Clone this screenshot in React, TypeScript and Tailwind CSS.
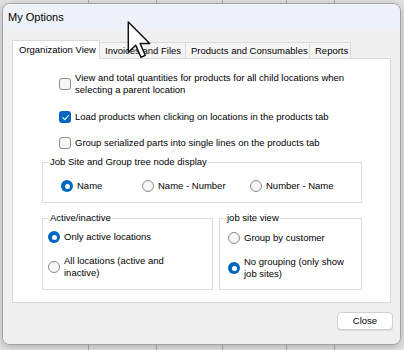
import React from "react";

const font = { fontFamily: '"Liberation Sans", Arial, sans-serif' };

const CheckBox = ({ checked }: { checked?: boolean }) =>
    checked ? (
        <span className="w-[12px] h-[12px] shrink-0 rounded-[3px] bg-[#0067c0] flex items-center justify-center">
            <svg width="9" height="9" viewBox="0 0 10 10">
                <path d="M2 5.2 L4.2 7.3 L8.2 2.8" fill="none" stroke="white" strokeWidth="1.2" strokeLinecap="round" strokeLinejoin="round" />
            </svg>
        </span>
    ) : (
        <span className="w-[12px] h-[12px] shrink-0 rounded-[3px] border border-[#8b8b8b] bg-[#f7f7f7]" />
    );

const Radio = ({ checked }: { checked?: boolean }) =>
    checked ? (
        <span className="w-[12px] h-[12px] shrink-0 rounded-full bg-[#0067c0] flex items-center justify-center">
            <span className="w-[5px] h-[5px] rounded-full bg-white" />
        </span>
    ) : (
        <span className="w-[12px] h-[12px] shrink-0 rounded-full border border-[#8b8b8b] bg-[#f7f7f7]" />
    );

const Tab = ({ label, width, active }: { label: string; width: string; active?: boolean }) => (
    <div
        className={
            active
                ? `${width} h-[19px] -mb-px relative z-10 bg-white border border-b-0 border-[#d9d9d9] pl-[6px] flex items-center`
                : `${width} h-[16px] bg-[#f5f5f5] border border-l-0 border-b-0 border-[#d9d9d9] pl-[5px] flex items-center`
        }
    >
        {label}
    </div>
);

export default function App() {
    return (
        <div className="relative w-[404px] h-[350px] overflow-hidden bg-[#e4e4e4] text-black" style={font}>
            {/* spreadsheet behind the dialog */}
            <div className="flex h-full">
                <div className="w-[89px] border-r border-[#a9a9a9]" />
                <div className="w-[68px] border-r border-[#a9a9a9]" />
                <div className="w-[66px] border-r border-[#a9a9a9]" />
                <div className="w-[64px] border-r border-[#a9a9a9]" />
                <div className="w-[48px] border-r border-[#a9a9a9]" />
                <div className="flex-1" />
            </div>

            {/* dialog window */}
            <div className="absolute left-[2px] top-[3px] w-[399px] h-[342px] rounded-lg border border-[#a4a4a4] bg-[#f0f0f0] shadow-[0_2px_8px_rgba(0,0,0,0.25)] overflow-hidden flex flex-col text-[9.5px] leading-[12px]">
                <div className="h-[25px] shrink-0 bg-[#eef2f8] pl-[5px] flex items-center text-[11px]">My Options</div>

                <div className="flex-1 bg-[#f0f0f0] px-[9px] pt-[11px] flex flex-col">
                    <div className="flex items-end">
                        <Tab label="Organization View" width="w-[88px]" active />
                        <Tab label="Invoices and Files" width="w-[86px]" />
                        <Tab label="Products and Consumables" width="w-[124px]" />
                        <Tab label="Reports" width="w-[41px]" />
                    </div>

                    <div className="h-[245px] bg-white border border-[#d9d9d9] flex flex-col pt-[13px]">
                        <div className="flex flex-col gap-[14px] pl-[46px]">
                            <label className="flex items-center gap-[4px]">
                                <CheckBox />
                                <span>
                                    View and total quantities for products for all child locations when
                                    <br />
                                    selecting a parent location
                                </span>
                            </label>
                            <label className="flex items-center gap-[4px] mt-px">
                                <CheckBox checked />
                                <span>Load products when clicking on locations in the products tab</span>
                            </label>
                            <label className="flex items-center gap-[4px]">
                                <CheckBox />
                                <span>Group serialized parts into single lines on the products tab</span>
                            </label>
                        </div>

                        <fieldset className="ml-[29px] mt-[7px] w-[320px] h-[47px] border border-[#dcdcdc]">
                            <legend className="ml-[6px] px-[1px]">Job Site and Group tree node display</legend>
                            <div className="flex items-center pl-[18px] pt-[12px]">
                                <div className="w-[81px] flex items-center gap-[4px]">
                                    <Radio checked />
                                    <span>Name</span>
                                </div>
                                <div className="w-[108px] flex items-center gap-[4px]">
                                    <Radio />
                                    <span>Name - Number</span>
                                </div>
                                <div className="flex items-center gap-[4px]">
                                    <Radio />
                                    <span>Number - Name</span>
                                </div>
                            </div>
                        </fieldset>

                        <div className="ml-[29px] mt-[9px] flex gap-[6px]">
                            <fieldset className="w-[171px] h-[78px] border border-[#dcdcdc]">
                                <legend className="ml-[6px] px-[1px]">Active/inactive</legend>
                                <div className="flex flex-col gap-[12px] pl-[5px] pt-[7px]">
                                    <div className="flex items-center gap-[4px]">
                                        <Radio checked />
                                        <span>Only active locations</span>
                                    </div>
                                    <div className="flex items-center gap-[4px]">
                                        <Radio />
                                        <span>
                                            All locations (active and
                                            <br />
                                            inactive)
                                        </span>
                                    </div>
                                </div>
                            </fieldset>
                            <fieldset className="w-[143px] h-[78px] border border-[#dcdcdc]">
                                <legend className="ml-[6px] px-[1px]">job site view</legend>
                                <div className="flex flex-col gap-[12px] pl-[8px] pt-[8px]">
                                    <div className="flex items-center gap-[4px]">
                                        <Radio />
                                        <span>Group by customer</span>
                                    </div>
                                    <div className="flex items-center gap-[4px]">
                                        <Radio checked />
                                        <span>
                                            No grouping (only show
                                            <br />
                                            job sites)
                                        </span>
                                    </div>
                                </div>
                            </fieldset>
                        </div>
                    </div>

                    <div className="flex justify-end -mr-[2px] mt-[9px]">
                        <button className="w-[56px] h-[18px] rounded-[4px] bg-white border border-[#d0d0d0] shadow-[0_1px_0_rgba(0,0,0,0.08)] flex items-center justify-center">
                            Close
                        </button>
                    </div>
                </div>
            </div>

            {/* mouse pointer */}
            <svg className="absolute left-[127px] top-[21px] z-50" width="24" height="38" viewBox="0 0 12 19.5">
                <path d="M0.5 0.5 L0.5 16 L4.3 12.4 L7 18.6 L9.2 17.6 L6.6 11.6 L11.5 11.6 Z" fill="white" stroke="#111" strokeWidth="0.75" strokeLinejoin="round" />
            </svg>
        </div>
    );
}
